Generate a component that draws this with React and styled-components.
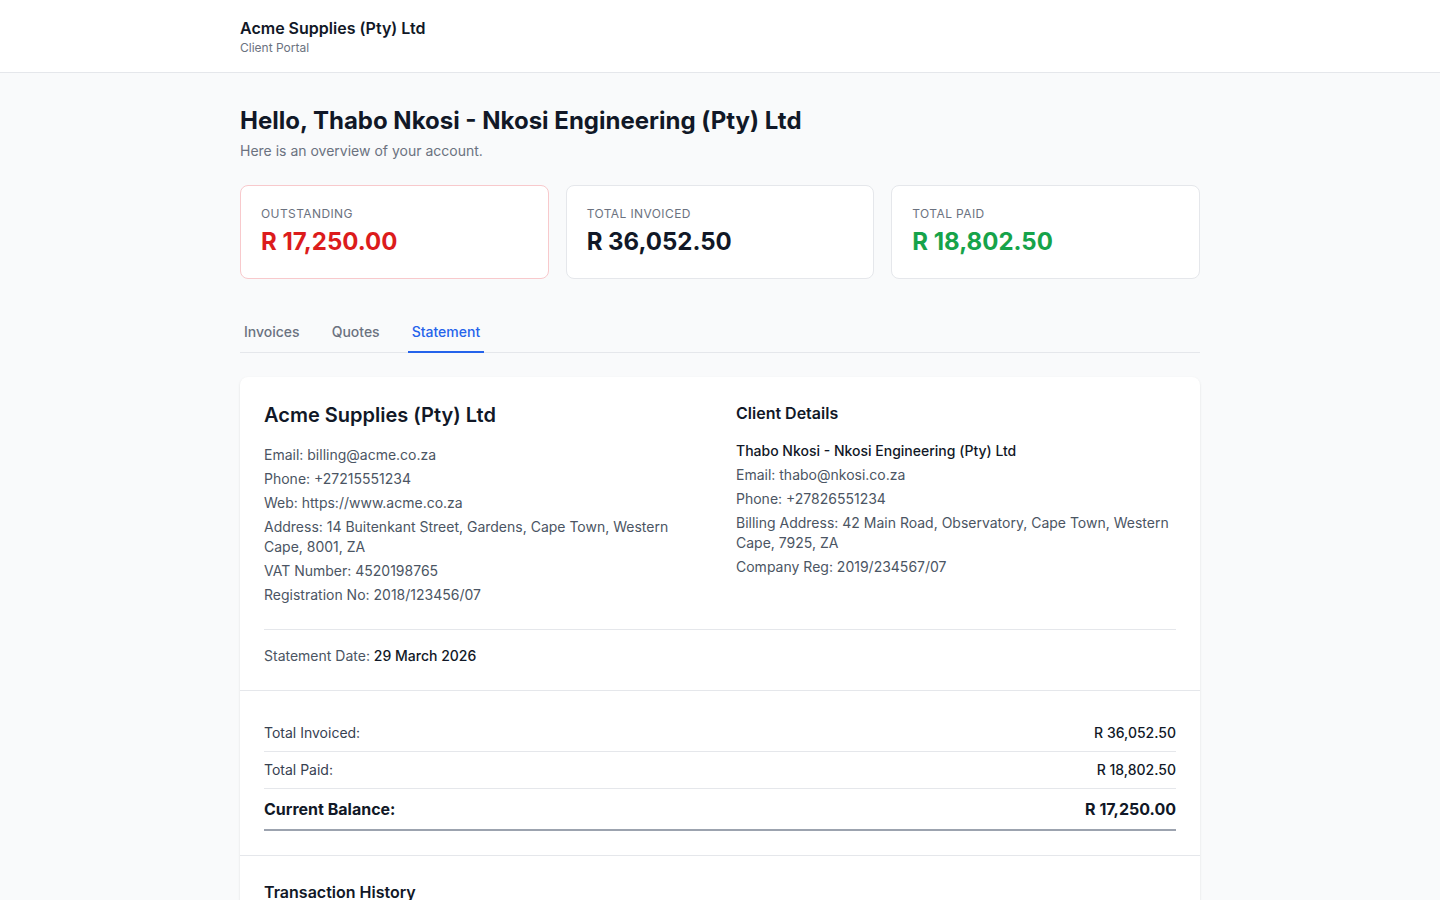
import React from 'react';
import styled, { createGlobalStyle } from 'styled-components';

const GlobalStyle = createGlobalStyle`
  * {
    box-sizing: border-box;
  }
  body {
    margin: 0;
    background: #f9fafb;
    font-family: Inter, "Noto Sans", "Liberation Sans", sans-serif;
    color: #111827;
    -webkit-font-smoothing: antialiased;
  }
  h1, h2, h3, p {
    margin: 0;
  }
`;

const Header = styled.header`
  background: #fff;
  border-bottom: 1px solid #e5e7eb;
  padding: 16px 0;
`;
const Container = styled.div`
  width: 960px;
  margin: 0 auto;
`;
const Brand = styled.div`
  font-size: 16px;
  line-height: 24px;
  font-weight: 600;
  color: #111827;
`;
const BrandSub = styled.div`
  font-size: 12px;
  line-height: 16px;
  color: #6b7280;
`;

const Main = styled.main`
  padding: 32px 0 48px;
`;
const Greeting = styled.h1`
  font-size: 24px;
  line-height: 32px;
  font-weight: 700;
  color: #111827;
  margin-bottom: 4px;
`;
const Lead = styled.p`
  font-size: 14px;
  line-height: 20px;
  color: #6b7280;
`;

const Stats = styled.div`
  display: grid;
  grid-template-columns: repeat(3, 1fr);
  gap: 17px;
  margin-top: 24px;
`;
const StatCard = styled.div`
  background: #fff;
  border: 1px solid ${p => (p.$alert ? '#f8c9cc' : '#e5e7eb')};
  border-radius: 8px;
  padding: 20px;
`;
const StatLabel = styled.div`
  font-size: 12px;
  line-height: 16px;
  letter-spacing: 0.4px;
  text-transform: uppercase;
  color: #6b7280;
`;
const StatValue = styled.div`
  margin-top: 4px;
  font-size: 24px;
  line-height: 32px;
  font-weight: 700;
  color: ${p => p.$color || '#111827'};
`;

const Tabs = styled.nav`
  display: flex;
  gap: 24px;
  margin-top: 32px;
  border-bottom: 1px solid #e5e7eb;
`;
const Tab = styled.button`
  background: none;
  border: 0;
  border-bottom: 2px solid ${p => (p.$active ? '#2563eb' : 'transparent')};
  margin-bottom: -1px;
  padding: 11px 4px 9px;
  font-family: inherit;
  font-size: 14px;
  line-height: 20px;
  font-weight: 500;
  color: ${p => (p.$active ? '#2563eb' : '#6b7280')};
  cursor: pointer;
`;

const Sheet = styled.section`
  margin-top: 24px;
  background: #fff;
  border-radius: 8px;
  box-shadow: 0 1px 3px rgba(0, 0, 0, 0.08), 0 1px 2px rgba(0, 0, 0, 0.04);
`;
const SheetSection = styled.div`
  padding: 24px;
  border-bottom: ${p => (p.$last ? '0' : '1px solid #e5e7eb')};
`;
const Parties = styled.div`
  display: grid;
  grid-template-columns: 1fr 1fr;
  gap: 32px;
  padding-bottom: 20px;
  border-bottom: 1px solid #e5e7eb;
`;
const CompanyName = styled.h2`
  font-size: 20px;
  line-height: 28px;
  font-weight: 600;
  margin-bottom: 16px;
`;
const SectionTitle = styled.h3`
  font-size: 16px;
  line-height: 24px;
  font-weight: 600;
  margin-bottom: 16px;
`;
const Line = styled.p`
  font-size: 14px;
  line-height: 20px;
  color: ${p => (p.$strong ? '#111827' : '#4b5563')};
  font-weight: ${p => (p.$strong ? 500 : 400)};
  margin-bottom: 4px;
`;
const DateLine = styled.p`
  margin-top: 16px;
  font-size: 14px;
  line-height: 20px;
  color: #4b5563;
  strong {
    font-weight: 500;
    color: #111827;
  }
`;

const TotalRow = styled.div`
  display: flex;
  justify-content: space-between;
  align-items: center;
  padding: 8px 0;
  font-size: ${p => (p.$grand ? '16px' : '14px')};
  line-height: ${p => (p.$grand ? '24px' : '20px')};
  font-weight: ${p => (p.$grand ? 700 : 400)};
  color: ${p => (p.$grand ? '#111827' : '#374151')};
  border-bottom: ${p => (p.$grand ? '2px solid #9ca3af' : '1px solid #e5e7eb')};
`;
const Amount = styled.span`
  font-weight: ${p => (p.$grand ? 700 : 500)};
  color: #111827;
`;

const stats = [
  { label: 'Outstanding', value: 'R 17,250.00', color: '#dc1c1c', alert: true },
  { label: 'Total Invoiced', value: 'R 36,052.50' },
  { label: 'Total Paid', value: 'R 18,802.50', color: '#16a34a' },
];

export default () => (
  <>
    <GlobalStyle />
    <Header>
      <Container>
        <Brand>Acme Supplies (Pty) Ltd</Brand>
        <BrandSub>Client Portal</BrandSub>
      </Container>
    </Header>
    <Main>
      <Container>
        <Greeting>Hello, Thabo Nkosi - Nkosi Engineering (Pty) Ltd</Greeting>
        <Lead>Here is an overview of your account.</Lead>

        <Stats>
          {stats.map(s => (
            <StatCard key={s.label} $alert={s.alert}>
              <StatLabel>{s.label}</StatLabel>
              <StatValue $color={s.color}>{s.value}</StatValue>
            </StatCard>
          ))}
        </Stats>

        <Tabs>
          <Tab>Invoices</Tab>
          <Tab>Quotes</Tab>
          <Tab $active>Statement</Tab>
        </Tabs>

        <Sheet>
          <SheetSection>
            <Parties>
              <div>
                <CompanyName>Acme Supplies (Pty) Ltd</CompanyName>
                <Line>Email: billing@acme.co.za</Line>
                <Line>Phone: +27215551234</Line>
                <Line>Web: https://www.acme.co.za</Line>
                <Line>Address: 14 Buitenkant Street, Gardens, Cape Town, Western Cape, 8001, ZA</Line>
                <Line>VAT Number: 4520198765</Line>
                <Line>Registration No: 2018/123456/07</Line>
              </div>
              <div>
                <SectionTitle>Client Details</SectionTitle>
                <Line $strong>Thabo Nkosi - Nkosi Engineering (Pty) Ltd</Line>
                <Line>Email: thabo@nkosi.co.za</Line>
                <Line>Phone: +27826551234</Line>
                <Line>Billing Address: 42 Main Road, Observatory, Cape Town, Western Cape, 7925, ZA</Line>
                <Line>Company Reg: 2019/234567/07</Line>
              </div>
            </Parties>
            <DateLine>
              Statement Date: <strong>29 March 2026</strong>
            </DateLine>
          </SheetSection>

          <SheetSection>
            <TotalRow>
              <span>Total Invoiced:</span>
              <Amount>R 36,052.50</Amount>
            </TotalRow>
            <TotalRow>
              <span>Total Paid:</span>
              <Amount>R 18,802.50</Amount>
            </TotalRow>
            <TotalRow $grand>
              <span>Current Balance:</span>
              <Amount $grand>R 17,250.00</Amount>
            </TotalRow>
          </SheetSection>

          <SheetSection $last>
            <SectionTitle>Transaction History</SectionTitle>
          </SheetSection>
        </Sheet>
      </Container>
    </Main>
  </>
);
